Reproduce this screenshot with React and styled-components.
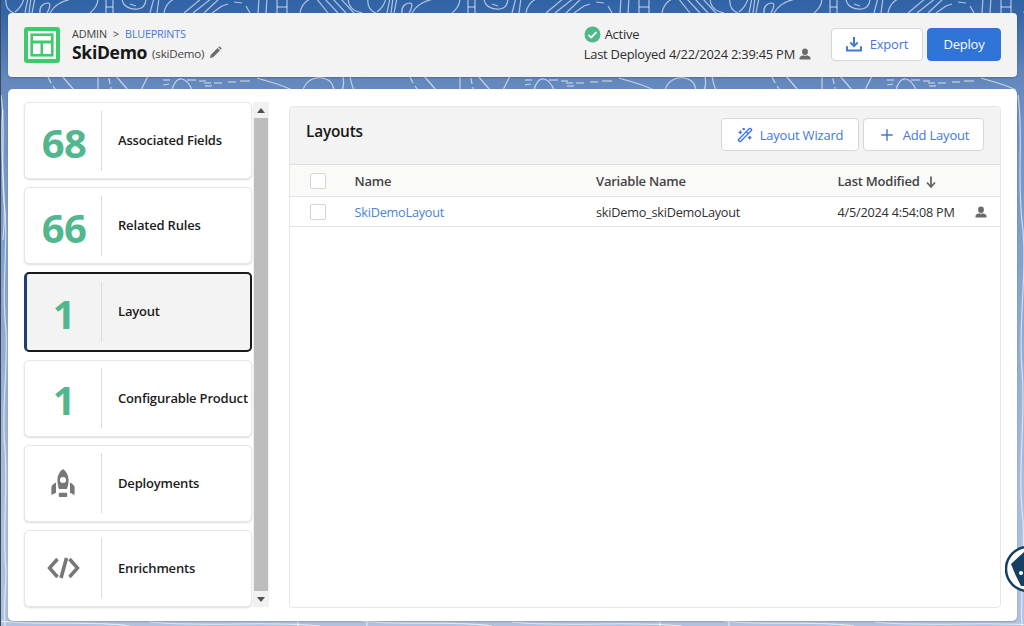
import React from "react";
import styled, { createGlobalStyle } from "styled-components";
import { WandSparkles, Plus } from "lucide-react";

const Global = createGlobalStyle`
  html, body { margin: 0; padding: 0; overflow: hidden; }
  * { box-sizing: border-box; }
  body { font-family: "Open Sans", "Noto Sans", sans-serif; color: #181818; }
`;

const Page = styled.div`
  position: relative; width: 1024px; height: 626px; overflow: hidden;
  display: flex; flex-direction: column; gap: 12px;
  padding: 13px 7px 5px 8px;
  background: linear-gradient(180deg, #3063a5 0, #3566a8 13px, #6488bd 80px, #6f92c4 130px, #a8bcdb 480px, #b0c2df 626px);
  border-left: 1px solid #3a4a5a;
`;
const Contours = styled.svg`
  position: absolute; left: -1px; top: 0; width: 1024px; height: 626px; pointer-events: none;
`;
const Header = styled.header`
  position: relative; height: 64px; margin-left: -1px; background: #f3f3f3; border-radius: 4px;
  display: flex; align-items: center; padding: 0 16px 2px 16px;
  box-shadow: 0 1px 2px rgba(0,0,0,.2);
`;
const LogoBox = styled.div`
  width: 36px; height: 36px; background: #3ecb6c; border-radius: 3px; margin-right: 12px; margin-top: 2px;
  display: flex; align-items: center; justify-content: center; flex: none;
`;
const Titles = styled.div`display: flex; flex-direction: column; margin-top: 2px;`;
const Crumbs = styled.div`
  font-size: 10.8px; line-height: 14px; color: #3e3e3c; display: flex; gap: 6px; letter-spacing: -.1px;
`;
const CrumbLink = styled.span`color: #4a78d6; letter-spacing: -.2px;`;
const TitleRow = styled.div`display: flex; align-items: center; gap: 5px; height: 23px;`;
const Title = styled.h1`margin: 0; font-size: 17.6px; line-height: 23px; font-weight: 700; letter-spacing: -.35px;`;
const ApiName = styled.span`font-size: 11.6px; color: #444; margin-top: 3px; letter-spacing: -.2px;`;
const Spacer = styled.div`flex: 1;`;
const Status = styled.div`display: flex; flex-direction: column; margin-right: 20px; font-size: 12.9px; color: #2e2e2e; letter-spacing: -.23px;`;
const StatusRow = styled.div`display: flex; align-items: center; gap: 4px; height: 20px;`;
const Button = styled.button`
  height: 33px; padding: 0; border-radius: 4px; font: inherit; font-size: 13px; letter-spacing: -.2px; white-space: nowrap;
  display: inline-flex; align-items: center; justify-content: center; gap: ${p => p.$gap ?? 8}px;
  background: ${p => p.$primary ? "#2f74d6" : "#fff"};
  color: ${p => p.$primary ? "#fff" : "#3f78d8"};
  border: 1px solid ${p => p.$primary ? "#2f74d6" : "#d6d6d6"};
  width: ${p => p.$w}px; margin-left: ${p => p.$ml ?? 0}px; flex: none;
`;
const Main = styled.main`
  position: relative; flex: 1; margin-left: -1px; background: #fff; border-radius: 5px; min-height: 0;
  display: flex; padding: 13px 16px 14px 16px; gap: 20px;
  box-shadow: 0 1px 2px rgba(0,0,0,.2);
`;
const Side = styled.div`display: flex; width: 245px; flex: none;`;
const Cards = styled.div`flex: 1; display: flex; flex-direction: column; gap: 8px; min-width: 0;`;
const Card = styled.div`
  flex: 1; display: flex; align-items: center; border-radius: 5px; position: relative;
  background: ${p => p.$active ? "#f3f3f3" : "#fff"};
  border: ${p => p.$active ? "2px solid #1a1a1a" : "1px solid #e6e6e6"};
  border-left: ${p => p.$active ? "3px solid #1c3f72" : "1px solid #e6e6e6"};
  box-shadow: ${p => p.$active ? "none" : "0 1px 2px rgba(0,0,0,.14)"};
`;
const Metric = styled.div`
  width: 77px; height: 60px; flex: none; border-right: 1px solid #dcdcdc;
  margin-left: ${p => p.$active ? "-2px" : "0"};
  display: flex; align-items: center; justify-content: center;
  padding: ${p => p.$num ? "3px 0 0 2px" : "0"};
  font-size: 40px; font-weight: 700; color: #52b78c; letter-spacing: -.5px;
`;
const CardLabel = styled.div`
  margin: -1px 0 0 16px; font-size: 13px; font-weight: 600; letter-spacing: -.18px; color: #1c1c1c; white-space: nowrap;
`;
const Scrollbar = styled.div`
  width: 16px; margin-left: 1px; background: #f1f1f1; display: flex; flex-direction: column; align-items: center;
`;
const Arrow = styled.div`height: 16px; display: flex; align-items: center; justify-content: center; flex: none;`;
const Thumb = styled.div`flex: 1; width: 14px; background: #bdbdbd;`;
const Panel = styled.section`
  flex: 1; border: 1px solid #e6e6e6; border-radius: 4px; overflow: hidden; margin: 4px 0 -1px 0; display: flex; flex-direction: column;
  min-width: 0;
`;
const PanelHead = styled.div`
  height: 58px; background: #f3f3f3; border-bottom: 1px solid #dddddd; display: flex; padding: 11px 16px 0 16px;
  gap: 4px; flex: none;
`;
const PanelTitle = styled.h2`
  margin: 1px 0 0; flex: 1; font-size: 15.4px; font-weight: 600; line-height: 26px; letter-spacing: -.2px; color: #181818;
`;
const Grid = styled.div`
  display: grid; grid-template-columns: 64.5px 241.5px 241.5px 1fr; align-items: center;
  height: ${p => p.$h}px;
  background: ${p => p.$head ? "#fafaf9" : "#fff"};
  border-bottom: 1px solid #e3e3e3; color: ${p => p.$head ? "#444" : "#303030"}; letter-spacing: -.22px;
  font-size: ${p => p.$head ? 13 : 12.7}px;
  font-weight: ${p => p.$head ? 600 : 400};
`;
const Box = styled.div`
  width: 16px; height: 16px; background: #fff; border: 1px solid #d5d5d5; border-radius: 2px;
  margin-left: 20px;
`;
const Cell = styled.div`display: flex; align-items: center; justify-content: ${p => p.$between ? "space-between" : "flex-start"}; gap: 5px; white-space: nowrap; padding-right: 13px;`;
const RowLink = styled.span`color: #4a82d8;`;
const Bot = styled.div`
  position: absolute; left: 1004px; top: 546px; width: 46px; height: 46px;
`;

const UserIcon = ({ size = 12, color = "#6b6b6b" }) => (
  <svg width={size} height={size} viewBox="0 0 24 24" fill={color}>
    <ellipse cx="12" cy="7.5" rx="5.8" ry="6.5" />
    <path d="M1 23v-3c0-3.2 4-4.6 7.4-5.6 2 1.6 5.2 1.6 7.2 0C19 15.4 23 16.8 23 20v3z" />
  </svg>
);
const Check = () => (
  <svg width="17" height="17" viewBox="0 0 17 17">
    <circle cx="8.5" cy="8.5" r="8" fill="#4fb98a" />
    <path d="M4.5 8.8l2.8 2.7 5.2-5.5" fill="none" stroke="#fff" strokeWidth="1.8" />
  </svg>
);
const Pencil = () => (
  <svg width="13" height="13" viewBox="0 0 14 14" fill="#6b6b6b">
    <path d="M1 13l.8-3.4 7.4-7.4 2.6 2.6-7.4 7.4z" />
    <path d="M10 1.4l.9-.7c.3-.2.7-.2 1 0l1.4 1.4c.2.3.2.7 0 1l-.7.9z" />
  </svg>
);
const Download = () => (
  <svg width="16" height="16" viewBox="0 0 15 15" fill="none" stroke="#3f78d8" strokeWidth="1.9">
    <path d="M7.5 1v8.3M4 6l3.5 3.5L11 6" />
    <path d="M1 9.5v4h13v-4" />
  </svg>
);
const SortArrow = () => (
  <svg width="10" height="12" viewBox="0 0 10 12" fill="none" stroke="#666" strokeWidth="1.8" style={{ marginLeft: 1, marginTop: 2 }}>
    <path d="M5 .5v10M1 6.500l4 4.500 4-4.500" />
  </svg>
);
const Rocket = () => (
  <svg width="26" height="30" viewBox="0 0 28 32" fill="#777">
    <path fillRule="evenodd" d="M14 1c3.5 2.5 6 7 6 12 0 3.5-.8 7-1.800 9.500H9.800C8.800 20 8 16.500 8 13 8 8 10.500 3.500 14 1zm0 8.500a3.300 3.300 0 100 6.600 3.300 3.300 0 000-6.600z" />
    <path d="M6.500 15.500v11L1.500 29v-8.500c0-2 3-4 5-5zM21.500 15.500v11l5 2.500v-8.500c0-2-3-4-5-5z" />
    <rect x="9.500" y="26.500" width="9" height="4.500" rx=".8" />
  </svg>
);
const Code = () => (
  <svg width="33" height="22" viewBox="0 0 33 22" fill="none" stroke="#777" strokeWidth="3.400">
    <path d="M10.500 2L2.500 11l8 9M22.500 2l8 9-8 9" />
    <path d="M19.500 1l-5.500 20" strokeWidth="3.600" />
  </svg>
);
const LogoGlyph = () => (
  <svg width="28" height="28" viewBox="0 0 28 28">
    <rect x="1.200" y="1.200" width="25.600" height="25.600" fill="none" stroke="#fff" strokeWidth="2.400" />
    <rect x="5" y="5" width="18" height="4.500" fill="#fff" />
    <rect x="5" y="12.500" width="7.500" height="10.500" fill="#fff" />
    <rect x="15" y="12.500" width="8" height="10.500" fill="#fff" />
  </svg>
);
const Tri = ({ up }) => (
  <svg width="8" height="5" viewBox="0 0 8 5" fill="#505050">
    <path d={up ? "M4 0l4 5H0z" : "M0 0h8L4 5z"} />
  </svg>
);
const BotFace = () => (
  <svg width="46" height="46" viewBox="0 0 46 46">
    <circle cx="23" cy="23" r="22" fill="#fff" stroke="#173f63" strokeWidth="2.500" />
    <path d="M6 18l14-13 8 3 10 10v14l-10 8H16l-6-12z" fill="#173f63" />
    <circle cx="16" cy="27" r="2" fill="#fff" />
  </svg>
);

const tilePaths = [
  /* top strip, period 362 */
  "M6 -2C5 6 8 11 14 13", "M15 12C20 8 23 4 24 -2",
  "M25 13L28 -2", "M29 13L31 -2", "M32 13L35 -2",
  "M40 13C39 7 43 3 48 3C51 3 50 8 47 13",
  "M50 13C54 6 60 1 72 -1",
  "M90 13C95 9 98 4 98 -2",
  "M106 13V-2", "M113 13V-2", "M106 7H113",
  "M122 -2C122 6 130 10 138 9C144 8 146 3 146 -2", "M130 4L136 6",
  "M150 13L154 -2", "M157 13L159 -2",
  "M164 13C165 6 168 2 174 -1",
  "M184 13L202 -2", "M193 13L212 -2", "M204 13L220 -2", "M212 13L222 6",
  "M222 6L228 4", "M234 2L242 3", "M246 6L250 13",
  "M258 13L259 -2", "M266 13L267 -2", "M277 13V-2", "M287 13V-2", "M277 7H287",
  "M300 13C301 6 304 2 310 -1",
  "M316 -2L328 13", "M324 -2L338 13", "M332 -2L346 13", "M340 -2L354 13",
  "M348 -2C348 8 356 14 368 13",
  /* band under the header */
  "M48 77L51 83", "M53 86L56 90",
  "M62 76L74 90", "M98 76V90", "M109 78L110 84", "M111 87V90",
  "M116 76L128 90", "M148 76L141 90",
  "M163 80H170", "M163 85L169 84",
  "M172 90C174 82 178 78 182 79C186 80 190 85 192 90",
  "M187 80H196", "M199 81H206", "M204 83H211", "M205 86H212", "M214 83H222", "M228 82H236", "M240 81H250",
  "M257 78C270 82 280 84 292 90",
  "M303 90C306 80 316 75 326 79C332 81 333 86 334 90",
  "M343 77C344 82 344 86 342 90", "M350 76C351 82 352 86 354 90", "M362 79L366 83",
  /* slim strips at the page sides */
  "M1 95C7 130 -1 170 5 210C8 250 1 290 6 330C8 370 1 410 5 450C8 490 2 530 6 570C6 590 3 610 5 626",
  "M3 110C-2 150 8 190 3 240",
  "M294 95C300 140 292 180 299 230C303 280 294 320 298 370C302 420 293 470 299 520C301 560 296 600 298 626",
  "M-2 621C40 626 90 620 130 626M150 622C210 628 260 620 320 626",
];

const cards = [
  { n: "68", l: "Associated Fields" },
  { n: "66", l: "Related Rules" },
  { n: "1", l: "Layout", active: true },
  { n: "1", l: "Configurable Product" },
  { icon: <Rocket />, l: "Deployments" },
  { icon: <Code />, l: "Enrichments" },
];

export default function App() {
  return (
    <Page>
      <Global />
      <Contours viewBox="0 0 1024 626">
        <defs>
          <pattern id="topo" x="0" y="0" width="362" height="626" patternUnits="userSpaceOnUse">
            <g fill="none" stroke="#fff" strokeOpacity=".62" strokeWidth="1.2">
              {tilePaths.map((d, i) => <path key={i} d={d} />)}
            </g>
          </pattern>
        </defs>
        <rect width="1024" height="626" fill="url(#topo)" />
      </Contours>
      <Header>
        <LogoBox><LogoGlyph /></LogoBox>
        <Titles>
          <Crumbs><span>ADMIN</span><span>&gt;</span><CrumbLink>BLUEPRINTS</CrumbLink></Crumbs>
          <TitleRow>
            <Title>SkiDemo</Title>
            <ApiName>(skiDemo)</ApiName>
            <Pencil />
          </TitleRow>
        </Titles>
        <Spacer />
        <Status>
          <StatusRow><Check /><span>Active</span></StatusRow>
          <StatusRow><span>Last Deployed 4/22/2024 2:39:45 PM</span><UserIcon /></StatusRow>
        </Status>
        <Button $w={92}><Download />Export</Button>
        <Button $primary $w={74} $ml={4}>Deploy</Button>
      </Header>
      <Main>
        <Side>
          <Cards>
            {cards.map(c => (
              <Card key={c.l} $active={c.active}>
                <Metric $active={c.active} $num={!!c.n}>{c.n ?? c.icon}</Metric>
                <CardLabel>{c.l}</CardLabel>
              </Card>
            ))}
          </Cards>
          <Scrollbar>
            <Arrow><Tri up /></Arrow>
            <Thumb />
            <Arrow><Tri /></Arrow>
          </Scrollbar>
        </Side>
        <Panel>
          <PanelHead>
            <PanelTitle>Layouts</PanelTitle>
            <Button $w={138} $gap={7}><WandSparkles size={16} strokeWidth={2} />Layout Wizard</Button>
            <Button $w={121} $gap={7}><Plus size={18} strokeWidth={1.9} />Add Layout</Button>
          </PanelHead>
          <Grid $head $h={32}>
            <Box />
            <Cell>Name</Cell>
            <Cell>Variable Name</Cell>
            <Cell>Last Modified <SortArrow /></Cell>
          </Grid>
          <Grid $h={30}>
            <Box />
            <Cell><RowLink>SkiDemoLayout</RowLink></Cell>
            <Cell>skiDemo_skiDemoLayout</Cell>
            <Cell $between>4/5/2024 4:54:08 PM <UserIcon /></Cell>
          </Grid>
        </Panel>
      </Main>
      <Bot><BotFace /></Bot>
    </Page>
  );
}
